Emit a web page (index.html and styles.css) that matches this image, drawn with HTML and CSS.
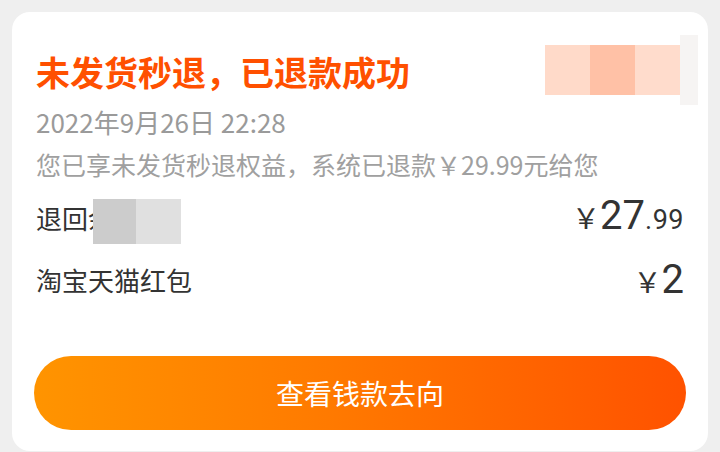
FILE: index.html
```html
<!DOCTYPE html>
<html lang="zh">
<head>
<meta charset="utf-8">
<link rel="stylesheet" href="styles.css">
</head>
<body>
<div class="card">
  <div class="head">
    <div class="title">未发货秒退，已退款成功</div>
    <div class="mask-top">
      <span class="c c1"></span><span class="c c2"></span><span class="c c3"></span><span class="c c4"></span>
    </div>
  </div>
  <div class="date">2022年9月26日 22:28</div>
  <div class="sub">您已享未发货秒退权益，系统已退款￥29.99元给您</div>
  <div class="row">
    <div class="label label1">退回余额<span class="mask-row"><span class="g1"></span><span class="g2"></span></span></div>
    <div class="amt"><span class="yen">￥</span><span class="big">27</span><span class="dec">.99</span></div>
  </div>
  <div class="row row2">
    <div class="label">淘宝天猫红包</div>
    <div class="amt"><span class="yen">￥</span><span class="big">2</span></div>
  </div>
  <div class="btn">查看钱款去向</div>
</div>
</body>
</html>
```
FILE: styles.css
```css
html, body {
  margin: 0;
  padding: 0;
  background: #efefef;
  font-family: "Noto Sans CJK SC", "Noto Sans", sans-serif;
}
.card {
  margin: 12px 12px 0;
  height: 439px;
  box-sizing: border-box;
  background: #fff;
  border-radius: 18px;
  padding: 36px 24px 0;
  display: flex;
  flex-direction: column;
}
.head {
  display: flex;
  align-items: center;
  justify-content: space-between;
  height: 48px;
}
.title {
  font-size: 34px;
  line-height: 48px;
  font-weight: 700;
  color: #ff5000;
}
.mask-top {
  display: flex;
  height: 70px;
  margin-right: -14px;
  margin-top: -4px;
  align-items: center;
}
.c { display: block; height: 50px; width: 45px; }
.c1 { background: #ffdac9; }
.c2 { background: #ffc1a6; }
.c3 { background: #ffdccc; }
.c4 { width: 18px; height: 70px; background: #f6f4f3; }
.date {
  margin-top: 8px;
  font-size: 26px;
  line-height: 36px;
  color: #9a9a9a;
}
.sub {
  margin-top: 6px;
  font-size: 25px;
  line-height: 36px;
  color: #a0a0a0;
}
.row {
  margin-top: 14px;
  height: 44px;
  display: flex;
  align-items: center;
  justify-content: space-between;
  color: #333;
}
.row2 { margin-top: 18px; }
.label {
  font-size: 26px;
  line-height: 44px;
}
.label1 {
  position: relative;
}
.mask-row {
  position: absolute;
  left: 57px;
  top: 3px;
  display: flex;
  height: 45px;
}
.g1 { width: 43px; background: #cccccc; }
.g2 { width: 45px; background: #e0e0e0; }
.amt {
  display: flex;
  align-items: baseline;
  color: #333;
  line-height: 44px;
}
.yen { font-size: 28px; margin-right: 0; }
.big { font-family: Roboto, "Noto Sans", sans-serif; font-size: 40px; }
.dec { font-family: Roboto, "Noto Sans", sans-serif; font-size: 27px; letter-spacing: 0.5px; }
.btn {
  margin: 54px -2px 0;
  height: 74px;
  border-radius: 37px;
  background: linear-gradient(90deg, #ff9400 0%, #ff7a00 45%, #ff5200 100%);
  color: #fff;
  font-size: 28px;
  display: flex;
  align-items: center;
  justify-content: center;
}
```
